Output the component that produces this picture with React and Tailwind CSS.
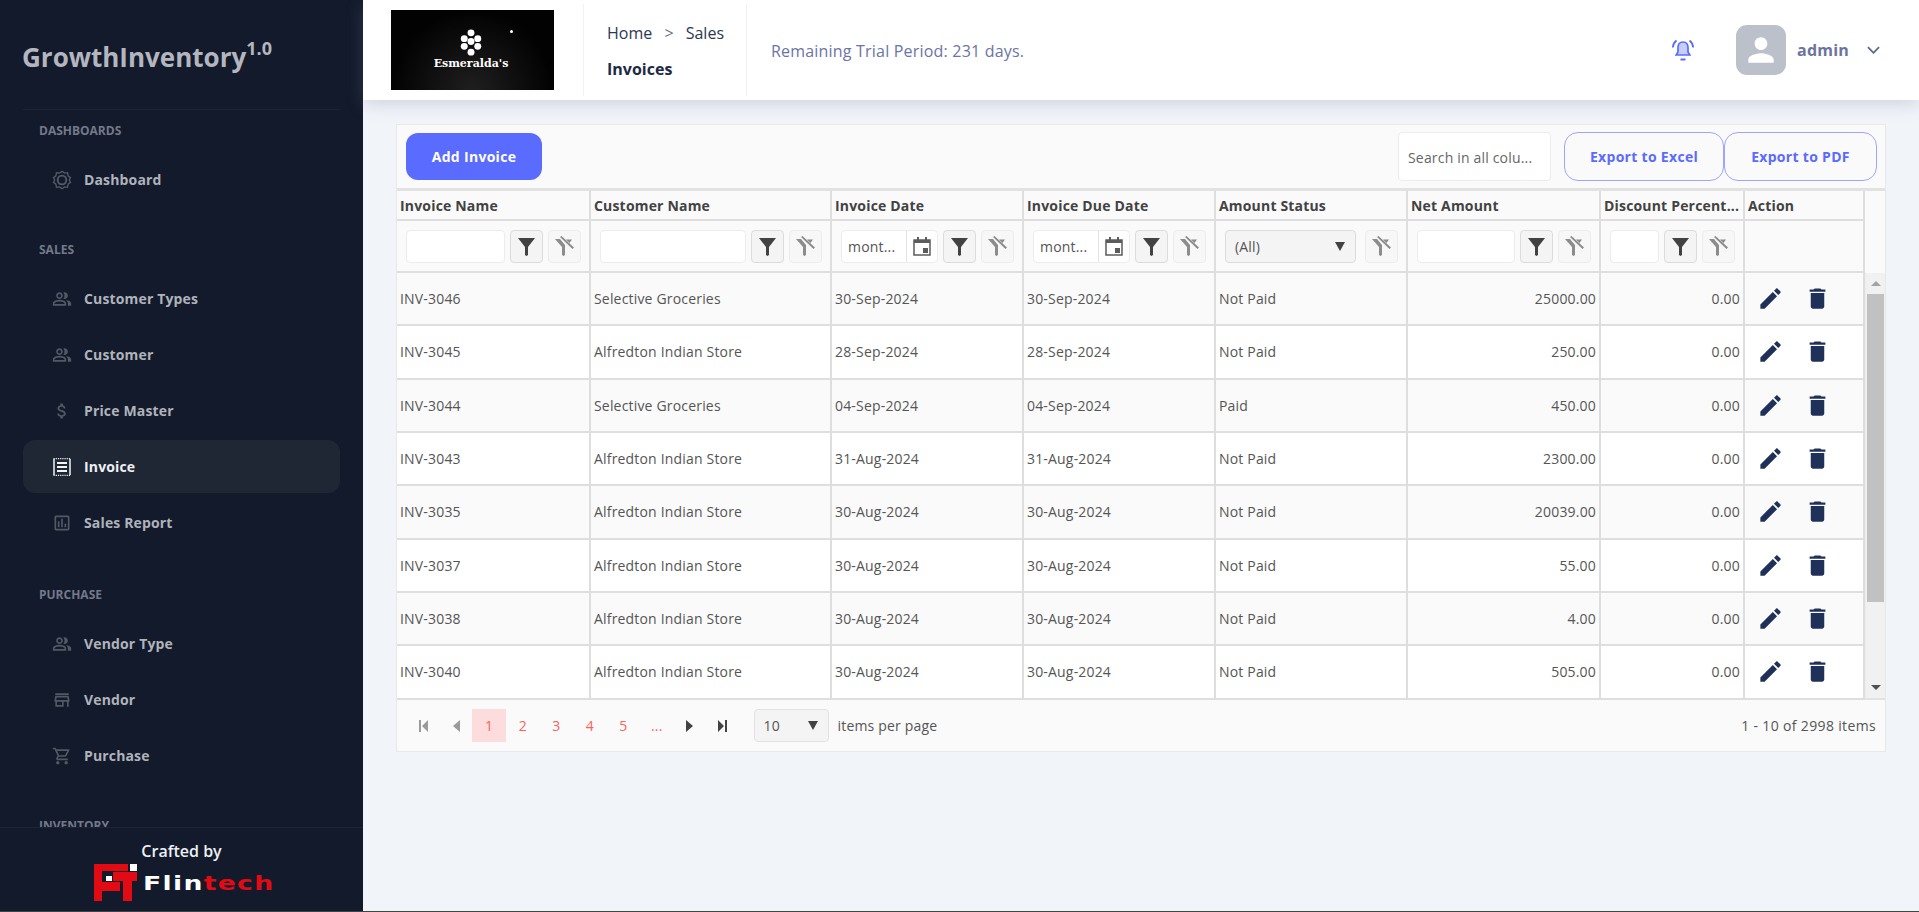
import React from 'react';

const Mi = ({ d, className }) => (
  <svg viewBox="0 0 24 24" className={className} fill="currentColor"><path d={d} /></svg>
);

const icons = {
  people: 'M16.67 13.13C18.04 14.06 19 15.32 19 17v3h4v-3c0-2.18-3.57-3.47-6.33-3.87zM9 12c2.21 0 4-1.79 4-4s-1.79-4-4-4-4 1.79-4 4 1.79 4 4 4zm0-6c1.1 0 2 .9 2 2s-.9 2-2 2-2-.9-2-2 .9-2 2-2zm6 6c2.21 0 4-1.79 4-4s-1.79-4-4-4c-.47 0-.91.1-1.33.24C14.5 5.27 15 6.58 15 8s-.5 2.73-1.33 3.76c.42.14.86.24 1.33.24zm-6 1c-2.67 0-8 1.34-8 4v3h16v-3c0-2.66-5.33-4-8-4zm6 5H3v-.99C3.2 16.29 6.3 15 9 15s5.8 1.29 6 2v1z',
  dollar: 'M11.8 10.9c-2.27-.59-3-1.2-3-2.15 0-1.09 1.01-1.85 2.7-1.85 1.78 0 2.44.85 2.5 2.1h2.21c-.07-1.72-1.12-3.3-3.21-3.81V3h-3v2.16c-1.94.42-3.5 1.68-3.5 3.61 0 2.31 1.91 3.46 4.7 4.13 2.5.6 3 1.48 3 2.41 0 .69-.49 1.79-2.7 1.79-2.06 0-2.87-.92-2.98-2.1h-2.2c.12 2.19 1.76 3.42 3.68 3.83V21h3v-2.15c1.95-.37 3.5-1.5 3.5-3.55 0-2.84-2.43-3.81-4.7-4.4z',
  chart: 'M19 3H5c-1.1 0-2 .9-2 2v14c0 1.1.9 2 2 2h14c1.1 0 2-.9 2-2V5c0-1.1-.9-2-2-2zm0 16H5V5h14v14zM7 10h2v7H7zm4-3h2v10h-2zm4 6h2v4h-2z',
  store: 'M20 4H4v2h16V4zm1 10v-2l-1-5H4l-1 5v2h1v6h10v-6h4v6h2v-6h1zm-9 4H6v-4h6v4zm-6.96-6l.6-3h12.72l.6 3H5.04z',
  cart: 'M15.55 13c.75 0 1.41-.41 1.75-1.03l3.58-6.49A.996.996 0 0 0 20.01 4H5.21l-.94-2H1v2h2l3.6 7.59-1.35 2.44C4.52 15.37 5.48 17 7 17h12v-2H7l1.1-2h7.45zM6.16 6h12.15l-2.76 5H8.53L6.16 6zM7 18c-1.1 0-1.99.9-1.99 2S5.9 22 7 22s2-.9 2-2-.9-2-2-2zm10 0c-1.1 0-1.99.9-1.99 2s.89 2 1.99 2 2-.9 2-2-.9-2-2-2z',
  edit: 'M3 17.25V21h3.75L17.81 9.94l-3.75-3.75L3 17.25zM20.71 7.04c.39-.39.39-1.02 0-1.41l-2.34-2.34c-.39-.39-1.02-.39-1.41 0l-1.83 1.83 3.75 3.75 1.83-1.83z',
  trash: 'M6 19c0 1.1.9 2 2 2h8c1.1 0 2-.9 2-2V7H6v12zM19 4h-3.5l-1-1h-5l-1 1H5v2h14V4z',
  person: 'M12 12c2.21 0 4-1.79 4-4s-1.79-4-4-4-4 1.79-4 4 1.79 4 4 4zm0 2c-2.67 0-8 1.34-8 4v2h16v-2c0-2.66-5.33-4-8-4z',
};

const DashIcon = ({ className }) => (
  <svg viewBox="0 0 24 24" className={className} fill="none" stroke="currentColor">
    <path strokeWidth="1.5" d="M12 1.5l3 2.2 3.7-.4.6 3.7 3 2.2-1.6 2.8 1.6 2.8-3 2.2-.6 3.7-3.7-.4-3 2.2-3-2.2-3.7.4-.6-3.700-3-2.200 1.600-2.800L1.700 9.200l3-2.200.6-3.700 3.700.4z" />
    <circle cx="12" cy="12" r="5.2" strokeWidth="2.2" />
  </svg>
);

const ReceiptIcon = () => (
  <svg viewBox="0 0 18 18" className="w-[18px] h-[18px] shrink-0 ml-[1px] mr-[1px] text-[#f2f3f5]" fill="none" stroke="currentColor">
    <path strokeWidth="1.5" d="M1 1v16M17 1v16" />
    <path strokeWidth="1.2" strokeDasharray="1.200 1" d="M0.500 0.700h17M0.500 17.300h17" />
    <path strokeWidth="2" d="M4 5h10M4 9h10M4 13h10" />
  </svg>
);

const BellIcon = () => (
  <svg viewBox="0 0 24 22" className="w-[24px] h-[22px] text-[#5a6bff] mr-[41px]" fill="none" stroke="currentColor">
    <path fill="#c6cdff" strokeWidth="1.7" d="M12 3c-3.300 0-5 2.600-5 5.500V13l-1.800 3h13.600L17 13V8.500C17 5.600 15.300 3 12 3z" />
    <path strokeWidth="1.800" d="M5.500 1.500C3.300 3.200 2 5.700 1.800 8.500M18.500 1.500c2.200 1.700 3.500 4.200 3.700 7M9.500 20.500h5" />
  </svg>
);

const FilterIcon = () => (
  <svg viewBox="0 0 17 20" className="w-[17px] h-[20px] text-[#424242]" fill="currentColor">
    <path d="M0 2h17L10 11v8l-1.500 1L7 19v-8z" />
  </svg>
);

const ClearIcon = () => (
  <svg viewBox="0 0 19 20" className="w-[19px] h-[20px] text-[#8c8c8c]" fill="currentColor">
    <path d="M0 3h5l5 6v10l-1.500 1L7 19v-8z" />
    <path d="M11 3.500h6L14.500 7z" />
    <path d="M5 1l1.500-1L19 11.500 17.500 13z" />
  </svg>
);

const CalendarIcon = () => (
  <svg viewBox="0 0 18 20" className="w-[18px] h-[20px] text-[#5c5c5c]">
    <path fill="none" stroke="currentColor" strokeWidth="1.500" d="M1 4h16v15H1z" />
    <path fill="currentColor" d="M1 4h16v3H1zM4 1h2v4H4zM12 1h2v4h-2zM10 12h5v5h-5z" />
  </svg>
);

const BtnBox = ({ children, muted }) => (
  <div className={`w-[33px] h-[33px] shrink-0 rounded-[4px] border flex items-center justify-center ${muted ? 'border-[#ececec] bg-[#f7f7f7]' : 'border-[#dcdcdc] bg-[#f4f4f4]'}`}>
    {children}
  </div>
);

const FilterBtns = () => (
  <>
    <BtnBox><FilterIcon /></BtnBox>
    <BtnBox muted><ClearIcon /></BtnBox>
  </>
);

const TextFilter = () => (
  <div className="flex items-center gap-[5px] w-full">
    <div className="flex-1 min-w-0 h-[33px] rounded-[4px] border border-[#ececec] bg-white" />
    <FilterBtns />
  </div>
);

const DateFilter = () => (
  <div className="flex items-center gap-[5px] w-full">
    <div className="flex-1 min-w-0 h-[33px] rounded-[4px] border border-[#ececec] bg-white flex items-center">
      <span className="flex-1 pl-[6px] text-[14px] text-[#555] truncate">mont...</span>
      <div className="w-[31px] h-full border-l border-[#e4e4e4] flex items-center justify-center">
        <CalendarIcon />
      </div>
    </div>
    <FilterBtns />
  </div>
);

const StatusFilter = () => (
  <div className="flex items-center gap-[9px] w-full">
    <div className="flex-1 h-[33px] rounded-[4px] border border-[#dcdcdc] bg-[#f4f4f4] flex items-center justify-between pl-[9px] pr-[10px]">
      <span className="text-[14px] text-[#555]">(All)</span>
      <span className="w-0 h-0 border-x-[5px] border-x-transparent border-t-[9px] border-t-[#424242]" />
    </div>
    <BtnBox muted><ClearIcon /></BtnBox>
  </div>
);

const columns = ['Invoice Name', 'Customer Name', 'Invoice Date', 'Invoice Due Date', 'Amount Status', 'Net Amount', 'Discount Percent...', 'Action'];

const rows = [
  ['INV-3046', 'Selective Groceries', '30-Sep-2024', 'Not Paid', '25000.00'],
  ['INV-3045', 'Alfredton Indian Store', '28-Sep-2024', 'Not Paid', '250.00'],
  ['INV-3044', 'Selective Groceries', '04-Sep-2024', 'Paid', '450.00'],
  ['INV-3043', 'Alfredton Indian Store', '31-Aug-2024', 'Not Paid', '2300.00'],
  ['INV-3035', 'Alfredton Indian Store', '30-Aug-2024', 'Not Paid', '20039.00'],
  ['INV-3037', 'Alfredton Indian Store', '30-Aug-2024', 'Not Paid', '55.00'],
  ['INV-3038', 'Alfredton Indian Store', '30-Aug-2024', 'Not Paid', '4.00'],
  ['INV-3040', 'Alfredton Indian Store', '30-Aug-2024', 'Not Paid', '505.00'],
];

const gridCols = 'grid grid-cols-[194px_241px_192px_192px_192px_193px_144px_120px]';
const cell = 'border-r-2 border-b-2 border-[#dedede] flex items-center min-w-0';
const filterCell = `${cell} h-[52px] pl-[9px] pr-[8px]`;

const NavSection = ({ title, className, children }) => (
  <div className={className}>
    <div className="pl-[39px] mb-[14px] text-[12px] font-bold text-[#74798a] leading-[16px]">{title}</div>
    {children}
  </div>
);

const NavItem = ({ icon, label, active, custom }) => (
  <div className={`mx-[23px] h-[53px] mt-[3px] pl-[29px] flex items-center gap-[12px] rounded-[12px] ${active ? 'bg-[#1f2735]' : ''}`}>
    {custom || <Mi d={icons[icon]} className="w-[20px] h-[20px] shrink-0 text-[#525865]" />}
    <span className={`text-[14px] font-bold tracking-[0.15px] ${active ? 'text-[#eef0f3]' : 'text-[#b0b3bb]'}`}>{label}</span>
  </div>
);

const Sidebar = () => (
  <aside className="w-[363px] shrink-0 h-full bg-[#121a2b] flex flex-col">
    <div className="ml-[22px] mr-[23px] h-[110px] shrink-0 border-b border-[#1c2434] pt-[37px]">
      <span className="text-[26px] font-bold leading-[40px] text-[#b4b6bf]">GrowthInventory</span>
      <sup className="text-[18px] font-bold text-[#b4b6bf] top-[-12px]">1.0</sup>
    </div>
    <div className="flex-1 min-h-0 overflow-hidden">
      <NavSection title="DASHBOARDS" className="mt-[13px]">
        <NavItem custom={<DashIcon className="w-[20px] h-[20px] shrink-0 text-[#565b68]" />} label="Dashboard" />
      </NavSection>
      <NavSection title="SALES" className="mt-[36px]">
        <NavItem icon="people" label="Customer Types" />
        <NavItem icon="people" label="Customer" />
        <NavItem icon="dollar" label="Price Master" />
        <NavItem custom={<ReceiptIcon />} label="Invoice" active />
        <NavItem icon="chart" label="Sales Report" />
      </NavSection>
      <NavSection title="PURCHASE" className="mt-[38px]">
        <NavItem icon="people" label="Vendor Type" />
        <NavItem icon="store" label="Vendor" />
        <NavItem icon="cart" label="Purchase" />
      </NavSection>
      <NavSection title="INVENTORY" className="mt-[36px]" />
    </div>
    <div className="h-[84px] shrink-0 border-t border-[#1c2434] flex flex-col items-center pt-[12px]">
      <span className="text-[16px] font-semibold text-[#eef0f4] leading-[22px]">Crafted by</span>
      <div className="flex items-end w-[175px] mt-[2px]">
        <svg viewBox="0 0 44 37" className="w-[44px] h-[37px] shrink-0">
          <path fill="#e30b13" d="M0 0h34v7H8v11h18v9H8v10H0z" />
          <path fill="#e30b13" d="M19 8h24v9h-5v20h-9V17H19z" />
          <rect x="12" y="12" width="6" height="5" fill="#fff" />
          <rect x="36" y="0" width="7" height="7" fill="#fff" />
        </svg>
        <span className="ml-[5px] mb-[7px] text-[20px] leading-[22px] font-bold tracking-[1px] scale-x-[1.33] origin-left [font-family:'DejaVu_Sans',sans-serif]">
          <span className="text-white">Flin</span><span className="text-[#e30b13]">tech</span>
        </span>
      </div>
    </div>
  </aside>
);

const Header = () => (
  <header className="h-[100px] shrink-0 bg-white shadow-[0_4px_16px_rgba(120,130,160,0.28)] flex items-center relative z-10">
    <div className="w-[163px] h-[80px] ml-[28px] bg-[radial-gradient(circle_at_50%_100%,#1f1f1f,#020202_70%)] relative flex flex-col items-center pt-[19px] pr-[3px]">
      <svg viewBox="0 0 24 28" className="w-[24px] h-[27px]" fill="#fff">
        <circle cx="12" cy="4" r="3.600" /><circle cx="5" cy="10" r="3.600" /><circle cx="19" cy="10" r="3.600" />
        <circle cx="12" cy="13" r="3.600" /><circle cx="5" cy="18" r="3.600" /><circle cx="19" cy="18" r="3.600" />
        <circle cx="12" cy="24" r="3.600" />
      </svg>
      <span className="text-[11px] font-bold text-white leading-[12px] mt-[2px] [font-family:'DejaVu_Serif',serif]">Esmeralda's</span>
      <span className="absolute left-[119px] top-[20px] w-[3px] h-[3px] rounded-full bg-white" />
    </div>
    <div className="ml-[29px] w-[164px] h-[92px] border-x border-[#f1f2f5] pl-[23px] pt-[2px] flex flex-col justify-center">
      <div className="text-[16px] leading-[24px] text-[#2c3854]">Home <span className="mx-[8px] text-[#6b7388]">&gt;</span> Sales</div>
      <div className="text-[16px] leading-[24px] font-bold text-[#1e2a44] mt-[12px]">Invoices</div>
    </div>
    <div className="ml-[24px] pt-[2px] flex-1 text-[16px] tracking-[0.2px] text-[#6b74a6]">Remaining Trial Period: 231 days.</div>
    <BellIcon />
    <div className="w-[50px] h-[50px] rounded-[11px] bg-[#bcc0cb] flex items-center justify-center">
      <Mi d={icons.person} className="w-[38px] h-[38px] text-white" />
    </div>
    <span className="ml-[11px] text-[16px] font-bold tracking-[0.2px] text-[#6c749e]">admin</span>
    <svg viewBox="0 0 14 8" className="w-[13px] h-[8px] ml-[18px] mr-[39px] text-[#5f6a90]" fill="none" stroke="currentColor" strokeWidth="2"><path d="M1 1l6 6 6-6" /></svg>
  </header>
);

const Toolbar = () => (
  <div className="h-[66px] flex items-center pl-[9px] pr-[8px] border-b-[3px] border-[#e2e2e2]">
    <div className="w-[136px] h-[47px] rounded-[12px] bg-[#5a6bff] text-white text-[14px] font-bold tracking-[0.3px] flex items-center justify-center">Add Invoice</div>
    <div className="ml-auto w-[153px] h-[49px] rounded-[4px] border border-[#ececec] bg-white pl-[9px] pt-[1px] flex items-center text-[14px] text-[#666]">Search in all colu...</div>
    <div className="ml-[13px] w-[160px] h-[49px] rounded-[14px] border border-[#9aa6ff] text-[#5a6bff] text-[14px] font-bold tracking-[0.3px] flex items-center justify-center">Export to Excel</div>
    <div className="w-[153px] h-[49px] rounded-[14px] border border-[#9aa6ff] text-[#5a6bff] text-[14px] font-bold tracking-[0.3px] flex items-center justify-center">Export to PDF</div>
  </div>
);

const PagerArrow = ({ dir, bar, muted }) => (
  <svg viewBox="0 0 12 14" className={`w-[12px] h-[14px] ${muted ? 'text-[#9a9a9a]' : 'text-[#424242]'}`} fill="currentColor">
    {dir === 'l' ? <path d={bar ? 'M2 1h2v12H2zM11 1v12L5 7z' : 'M10 1v12L3 7z'} /> : <path d={bar ? 'M1 1v12l6-6zM8 1h2v12H8z' : 'M2 1v12l7-6z'} />}
  </svg>
);

const Pager = () => (
  <div className="h-[51px] flex items-center text-[14px] text-[#555] pl-[9px] pr-[9px]">
    <div className="w-[33px] flex justify-center"><PagerArrow dir="l" bar muted /></div>
    <div className="w-[33px] flex justify-center"><PagerArrow dir="l" muted /></div>
    <div className="w-[34px] h-[33px] bg-[#fcdcdc] flex items-center justify-center text-[#ff6358]">1</div>
    {['2', '3', '4', '5', '...'].map(p => (
      <div key={p} className="w-[33.500px] h-[33px] flex items-center justify-center text-[#ff6358]">{p}</div>
    ))}
    <div className="w-[33px] flex justify-center"><PagerArrow dir="r" /></div>
    <div className="w-[33px] flex justify-center"><PagerArrow dir="r" bar /></div>
    <div className="ml-[14px] w-[75px] h-[33px] rounded-[4px] border border-[#e2e2e2] bg-[#f4f4f4] flex items-center justify-between pl-[9px] pr-[10px]">
      <span>10</span>
      <span className="w-0 h-0 border-x-[5px] border-x-transparent border-t-[9px] border-t-[#424242]" />
    </div>
    <span className="ml-[9px]">items per page</span>
    <span className="ml-auto tracking-[0.35px]">1 - 10 of 2998 items</span>
  </div>
);

const Scrollbar = () => (
  <div className="w-[21px] h-full bg-[#f1f1f1] flex flex-col items-center border-l border-[#ececec]">
    <div className="h-[21px] flex items-center justify-center">
      <span className="w-0 h-0 border-x-[5px] border-x-transparent border-b-[5px] border-b-[#a3a3a3]" />
    </div>
    <div className="w-[17px] h-[308px] bg-[#c1c1c1]" />
    <div className="flex-1" />
    <div className="h-[21px] flex items-center justify-center">
      <span className="w-0 h-0 border-x-[5px] border-x-transparent border-t-[5px] border-t-[#505050]" />
    </div>
  </div>
);

const Grid = () => (
  <div className="mt-[24px] mx-[33px] border border-[#e8e8e8] bg-[#fafafa] text-[#555] tracking-[0.18px]">
    <Toolbar />
    <div className="flex">
      <div className={`${gridCols} w-[1468px]`}>
        {columns.map(c => (
          <div key={c} className={`${cell} h-[30px] px-[3px] text-[14px] font-bold text-[#424242] truncate`}>{c}</div>
        ))}
        <div className={filterCell}><TextFilter /></div>
        <div className={filterCell}><TextFilter /></div>
        <div className={filterCell}><DateFilter /></div>
        <div className={filterCell}><DateFilter /></div>
        <div className={filterCell}><StatusFilter /></div>
        <div className={filterCell}><TextFilter /></div>
        <div className={filterCell}><TextFilter /></div>
        <div className={`${cell} h-[52px]`} />
      </div>
      <div className="w-[21px]" />
    </div>
    <div className="flex h-[427px] border-b-2 border-[#e2e2e2]">
      <div className="w-[1468px]">
        {rows.map((r, i) => (
          <div key={r[0]} className={`${gridCols} h-[53.330px] ${i % 2 === 0 ? 'bg-[#fafafa]' : 'bg-white'}`}>
            <div className={`${cell} px-[3px] text-[14px]`}>{r[0]}</div>
            <div className={`${cell} px-[3px] text-[14px]`}>{r[1]}</div>
            <div className={`${cell} px-[3px] text-[14px]`}>{r[2]}</div>
            <div className={`${cell} px-[3px] text-[14px]`}>{r[2]}</div>
            <div className={`${cell} px-[3px] text-[14px]`}>{r[3]}</div>
            <div className={`${cell} px-[3px] text-[14px] justify-end`}>{r[4]}</div>
            <div className={`${cell} px-[3px] text-[14px] justify-end`}>0.00</div>
            <div className={`${cell} pl-[12px] gap-[20px]`}>
              <Mi d={icons.edit} className="w-[27px] h-[27px] text-[#1f3158]" />
              <Mi d={icons.trash} className="w-[27px] h-[27px] text-[#1f3158]" />
            </div>
          </div>
        ))}
      </div>
      <Scrollbar />
    </div>
    <Pager />
  </div>
);

export default function App() {
  return (
    <div className="w-full h-[912px] flex overflow-hidden border-b border-[#444] bg-[#f1f4f9] [font-family:'Open_Sans',sans-serif]">
      <Sidebar />
      <main className="flex-1 min-w-0 flex flex-col">
        <Header />
        <Grid />
      </main>
    </div>
  );
}
